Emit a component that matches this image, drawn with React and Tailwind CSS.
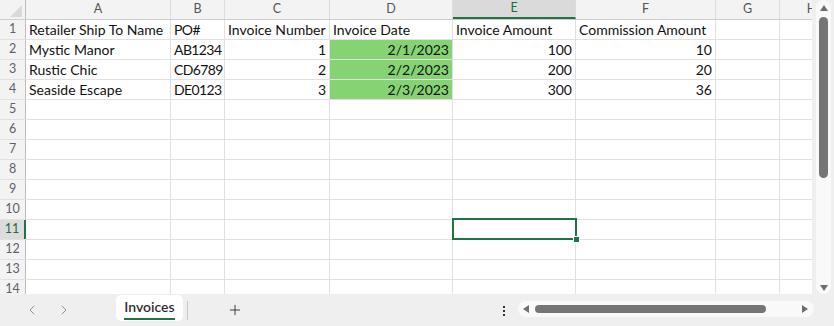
import { ChevronLeft, ChevronRight, Plus } from "lucide-react";

const font = { fontFamily: "Lato, 'Liberation Sans', sans-serif" };

const columns = [
  { key: "A", w: "w-[145px]" },
  { key: "B", w: "w-[54px]" },
  { key: "C", w: "w-[105px]" },
  { key: "D", w: "w-[123px]" },
  { key: "E", w: "w-[123px]" },
  { key: "F", w: "w-[140px]" },
  { key: "G", w: "w-[64px]" },
  { key: "H", w: "w-[64px]" },
];

const data = [
  ["Retailer Ship To Name", "PO#", "Invoice Number", "Invoice Date", "Invoice Amount", "Commission Amount"],
  ["Mystic Manor", "AB1234", "1", "2/1/2023", "100", "10"],
  ["Rustic Chic", "CD6789", "2", "2/2/2023", "200", "20"],
  ["Seaside Escape", "DE0123", "3", "2/3/2023", "300", "36"],
];

function Cell({ row, col }) {
  const value = data[row - 1]?.[col] ?? "";
  const isNumber = row > 1 && col >= 2 && col <= 5;
  const green = row > 1 && row <= 4 && col === 3;
  return (
    <div
      className={`${columns[col].w} shrink-0 h-full border-r border-[#e1e1e1] px-[3px] text-[14px] leading-[19px] text-[#111] whitespace-nowrap ${
        isNumber ? "text-right" : "text-left"
      } ${col === 1 ? "tracking-[-0.6px]" : ""} ${green ? "bg-[#86d373] border-[#7cc46a]" : ""}`}
    >
      {value}
    </div>
  );
}

function Grid() {
  const rows = Array.from({ length: 14 }, (_, i) => i + 1);
  return (
    <div className="relative flex-1 overflow-hidden bg-white">
      {/* column headers */}
      <div className="flex h-[20px] border-b border-[#cdcdcd] bg-[#f3f3f3]">
        <div className="w-[26px] shrink-0 h-full border-r border-[#bdbdbd] flex items-end justify-end pr-[3px] pb-[2px]">
          <svg width="12" height="12" viewBox="0 0 12 12">
            <polygon points="0,12 12,12 12,0" fill="#d9d9d9" />
          </svg>
        </div>
        {columns.map((c) => (
          <div
            key={c.key}
            className={`${c.w} shrink-0 h-full border-r border-[#dcdcdc] flex items-center justify-center text-[12.5px] ${
              c.key === "E"
                ? "bg-[#dadada] text-[#1d6b3f] border-b-2 border-b-[#217346]"
                : "text-[#555]"
            }`}
          >
            {c.key}
          </div>
        ))}
      </div>

      {rows.map((r) => (
        <div key={r} className="flex h-[20px] border-b border-[#e1e1e1]">
          <div
            className={`w-[26px] shrink-0 h-full flex items-center justify-center text-[12.5px] ${
              r === 11
                ? "bg-[#dcdcdc] text-[#1d6b3f] border-r-2 border-r-[#217346]"
                : "bg-[#f3f3f3] text-[#5f5f6b] border-r border-[#bdbdbd]"
            }`}
          >
            {r}
          </div>
          {columns.map((c, i) => (
            <Cell key={c.key} row={r} col={i} />
          ))}
        </div>
      ))}

      {/* active cell E11 */}
      <div className="absolute left-[452px] top-[218px] w-[125px] h-[22px] border-2 border-[#217346]" />
      <div className="absolute left-[573px] top-[236px] w-[5px] h-[5px] bg-[#217346] border border-white box-content" />
    </div>
  );
}

function VScroll() {
  return (
    <div className="w-[22px] shrink-0 h-full bg-[#efefef] pl-[4px] pr-[3px]">
      <div className="h-full w-[15px] rounded-full bg-[#f9f9f9] flex flex-col items-center">
        <svg className="mt-[5px]" width="8" height="6" viewBox="0 0 8 6">
          <polygon points="0,6 8,6 4,0" fill="#6e6e6e" />
        </svg>
        <div className="mt-[6px] w-[9px] h-[161px] rounded-full bg-[#757575]" />
        <svg className="mt-auto mb-[3px]" width="8" height="6" viewBox="0 0 8 6">
          <polygon points="0,0 8,0 4,6" fill="#6e6e6e" />
        </svg>
      </div>
    </div>
  );
}

function BottomBar() {
  return (
    <div className="h-[32px] flex items-start bg-[#efefef]">
      <div className="w-[116px] shrink-0 h-full flex items-center">
        <ChevronLeft className="ml-[24px]" size={16} strokeWidth={1.5} color="#959595" />
        <ChevronRight className="ml-[16px]" size={16} strokeWidth={1.5} color="#959595" />
      </div>
      <div className="mt-[1px] w-[67px] h-[26px] rounded-[5px] bg-white flex flex-col items-center">
        <span className="mt-[2px] text-[14px] font-semibold leading-[19px] text-[#303030]">Invoices</span>
        <div className="mt-[2px] w-[51px] h-[2px] bg-[#217346]" />
      </div>
      <div className="ml-[4px] mt-[7px] w-px h-[19px] bg-[#c8c8c8]" />
      <Plus className="ml-[39px] mt-[8px]" size={16} strokeWidth={1.4} color="#333" />
      <div className="ml-[260px] mt-[12px] flex flex-col gap-[2px]">
        <div className="w-[2px] h-[2px] bg-[#333]" />
        <div className="w-[2px] h-[2px] bg-[#333]" />
        <div className="w-[2px] h-[2px] bg-[#333]" />
      </div>
      <div className="ml-[13px] mt-[7px] w-[296px] h-[16px] rounded-full bg-[#f9f9f9] flex items-center pl-[5px]">
        <svg width="6" height="8" viewBox="0 0 6 8">
          <polygon points="6,0 6,8 0,4" fill="#6e6e6e" />
        </svg>
        <div className="ml-[6px] w-[231px] h-[8px] rounded-full bg-[#757575]" />
        <svg className="ml-[36px]" width="6" height="8" viewBox="0 0 6 8">
          <polygon points="0,0 0,8 6,4" fill="#6e6e6e" />
        </svg>
      </div>
    </div>
  );
}

export default function App() {
  return (
    <div className="w-[834px] h-[326px] flex flex-col overflow-hidden bg-[#efefef]" style={font}>
      <div className="h-[294px] flex">
        <Grid />
        <VScroll />
      </div>
      <BottomBar />
    </div>
  );
}
